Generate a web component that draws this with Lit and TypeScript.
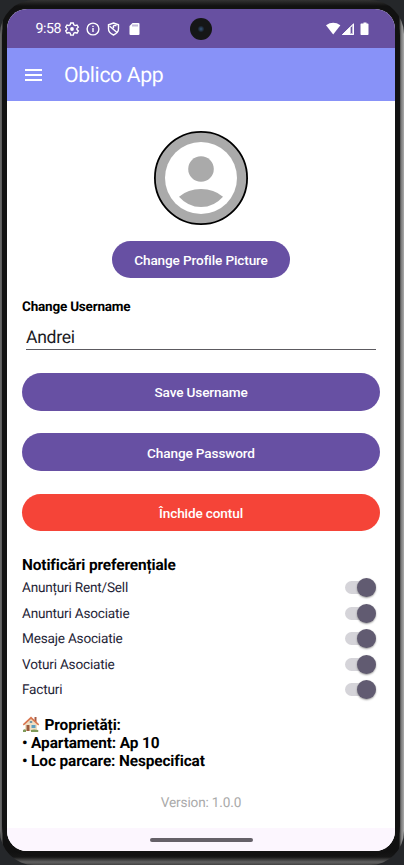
import { LitElement, html, css } from "lit";
import { customElement, property } from "lit/decorators.js";

@customElement("pref-row")
class PrefRow extends LitElement {
  @property() label = "";
  static styles = css`
    :host { display: flex; height: 25.65px; align-items: center; justify-content: space-between; padding-right: 4px; }
    .name { font-size: 13.6px; letter-spacing: -0.2px; color: #1f2537; padding-top: 1px; }
    .track { width: 31px; height: 13px; border-radius: 7px; background: #d5d4d9; display: flex; align-items: center; justify-content: flex-end; }
    .thumb { width: 19px; height: 19px; flex: none; border-radius: 50%; background: #615b71; box-shadow: 0 1px 2px rgba(0, 0, 0, 0.4); }
  `;
  render() {
    return html`<span class="name">${this.label}</span><span class="track"><span class="thumb"></span></span>`;
  }
}

@customElement("app-root")
class AppRoot extends LitElement {
  static styles = css`
    :host { display: block; width: 404px; height: 865px; overflow: hidden; font-family: Roboto, "Noto Sans", sans-serif; text-rendering: geometricPrecision; background: #25272a; color: #000; white-space: nowrap; }
    * { box-sizing: border-box; }
    .phone { width: 404px; height: 865px; padding: 6px 4px 9px 2px; border-radius: 34px; background: linear-gradient(180deg, #333 0, #111 6px, transparent 7px, transparent 852px, #161616 857px, #606060 862px, #444 865px), linear-gradient(90deg, #6b6b6b 0, #555 2px, #111 3px, #111 399px, #777 401px, #aaa 404px); }
    .bezel { height: 850px; padding: 3px 5px 5px 5px; border-radius: 30px; background: #121212; }
    .screen { width: 388px; height: 842px; border-radius: 20px; overflow: hidden; background: #fff; display: flex; flex-direction: column; }
    .status { height: 39px; flex: none; background: #6750a1; display: flex; align-items: center; color: #fff; padding: 0 26px 0 28.5px; position: relative; }
    .time { font-size: 14.2px; letter-spacing: -0.45px; line-height: 16px; width: 29px; }
    .status svg { display: block; flex: none; }
    .space { flex: 1; }
    .camera { position: absolute; left: 183px; top: 9px; width: 22px; height: 22px; border-radius: 50%; background: #151617; display: grid; place-items: center; }
    .lens { width: 6px; height: 6px; border-radius: 50%; background: radial-gradient(#35557a, #1d2836 60%, #151617); }
    .bar { height: 53px; flex: none; background: #8892f8; display: flex; align-items: center; padding-left: 18px; color: #fff; }
    .menu { width: 17px; height: 12px; margin-right: 22px; }
    .title { font-size: 21.2px; letter-spacing: -0.35px; padding-top: 1px; }
    .main { flex: 1; padding: 30px 15px 0; display: flex; flex-direction: column; }
    .avatar { width: 94px; height: 94px; align-self: center; flex: none; }
    .btn { height: 37.5px; flex: none; border: 0; border-radius: 19px; background: #6750a3; color: #fff; font: 500 13.6px Roboto, sans-serif; letter-spacing: -0.13px; padding: 1px 0 0; width: 358px; }
    .pic { width: 178px; align-self: center; margin-top: 15.5px; }
    .label { font-weight: 700; font-size: 13.5px; letter-spacing: -0.2px; line-height: 16px; margin-top: 21px; }
    .field { height: 35px; margin: 0 4px; border-bottom: 1px solid #5c5a60; font-size: 17.6px; letter-spacing: -0.3px; line-height: 46px; color: #1c1b1f; }
    .save { margin-top: 23px; }
    .next { margin-top: 22.8px; }
    .danger { background: #f54438; }
    .heading { font-weight: 700; font-size: 15.4px; letter-spacing: -0.12px; line-height: 18px; margin-top: 24.8px; }
    .list { margin-top: 0.7px; }
    .props { font-weight: 700; font-size: 15.4px; letter-spacing: -0.12px; line-height: 18px; margin-top: 13px; }
    .line { height: 18px; display: flex; align-items: center; }
    .house { width: 18px; height: 17px; margin-right: 4.5px; }
    .version { text-align: center; font-size: 13.6px; letter-spacing: -0.15px; line-height: 16px; color: #aaa; margin-top: 25px; }
    .nav { height: 23px; flex: none; background: #fcf6fe; display: flex; justify-content: center; padding-top: 10px; }
    .handle { width: 103px; height: 4px; border-radius: 2px; background: #656068; }
  `;
  render() {
    const prefs = ["Anunțuri Rent/Sell", "Anunturi Asociatie", "Mesaje Asociatie", "Voturi Asociatie", "Facturi"];
    return html`<div class="phone"><div class="bezel"><div class="screen">
      <div class="status">
        <span class="time">9:58</span>
        <svg width="100" height="16" viewBox="0 0 100 16" fill="none" stroke="#fff" stroke-width="1.4">
          <path d="M5.7 2h2.6l.5 1.900 1.300.7 1.900-.6 1.300 2.200-1.400 1.300v1l1.400 1.400-1.300 2.200-1.900-.6-1.300.7-.5 1.900H5.700l-.5-1.900-1.300-.7-1.900.6L.7 9.900l1.400-1.400v-1L.7 6.200 2 4l1.900.6 1.300-.7z"/>
          <circle cx="7" cy="8" r="1.900" fill="#fff" stroke="none"/>
          <circle cx="28" cy="8" r="5.900"/><path d="M28 7v4M28 4.700v1.400"/>
          <path d="M48.500 2l5 1.800v4c0 3-2 5-5 6.200-3-1.200-5-3.200-5-6.200v-4z"/><path d="M44.500 5l7.500 6.500M51.500 4.500h-2.500q-1.500 1 0 2.500"/>
          <path d="M67.500 2h6a1 1 0 0 1 1 1v10a1 1 0 0 1-1 1h-8a1 1 0 0 1-1-1V5z" fill="#fff" stroke="none"/>
          <path d="M68 3.500v2M70 3.500v2M72 3.500v2" stroke="#6750a1" stroke-width=".8"/>
        </svg>
        <span class="space"></span>
        <svg width="43" height="14" viewBox="0 0 43 14" fill="#fff">
          <path d="M0 3.300Q7.200-1.600 14.400 3.300L7.200 12.500z"/>
          <path d="M28 1v12H16z" opacity=".6"/><path d="M24 5v8h-8z"/><path d="M27.500 2v10.500h-11z" fill="none" stroke="#fff"/><path d="M25.500 5v6" stroke="#6750a1"/>
          <path d="M35.500 1.500h2V.5h3v1h1.200a.8.8 0 0 1 .8.800v10a.8.8 0 0 1-.8.800h-6.400a.8.8 0 0 1-.8-.800v-10a.8.8 0 0 1 .8-.800z"/>
        </svg>
        <span class="camera"><span class="lens"></span></span>
      </div>
      <div class="bar">
        <svg class="menu" viewBox="0 0 17 12" fill="#fff"><path d="M0 0h17v2H0zM0 5h17v2H0zM0 10h17v2H0z"/></svg>
        <span class="title">Oblico App</span>
      </div>
      <div class="main">
        <svg class="avatar" viewBox="0 0 94 94">
          <circle cx="47" cy="47" r="46.100" fill="#aaa" stroke="#000" stroke-width="1.800"/>
          <circle cx="47" cy="47" r="36" fill="#fff"/>
          <circle cx="47" cy="38" r="12.800" fill="#aaa"/>
          <path d="M25 65.700Q34 58 47 58t22 7.700Q60 76 47 76T25 65.700z" fill="#aaa"/>
        </svg>
        <button class="btn pic">Change Profile Picture</button>
        <div class="label">Change Username</div>
        <div class="field">Andrei</div>
        <button class="btn save">Save Username</button>
        <button class="btn next">Change Password</button>
        <button class="btn next danger">Închide contul</button>
        <div class="heading">Notificări preferențiale</div>
        <div class="list">${prefs.map((p) => html`<pref-row .label=${p}></pref-row>`)}</div>
        <div class="props">
          <div class="line">
            <svg class="house" viewBox="0 0 18 17">
              <path d="M12.500 1h2v5h-2z" fill="#a65b43"/><path d="M3 8l6-6 6 6v7H3z" fill="#f0dfc4"/>
              <path d="M9 .5L.8 8.300l1 1.200L9 3l7.200 6.500 1-1.200z" fill="#d9764f"/>
              <path d="M4.500 9h3v6h-3z" fill="#9b5a3c"/><path d="M9.500 9h4v3h-4z" fill="#5f9fc0"/><path d="M7.800 5h2.400v2H7.800z" fill="#7397a8"/>
              <path d="M1 14q2-1.500 3 0v2H1zM9 14q3-1 7 0 1 1 0 2H9z" fill="#7f9a5a"/>
            </svg>
            <span>Proprietăți:</span>
          </div>
          <div class="line">• Apartament: Ap 10</div>
          <div class="line">• Loc parcare: Nespecificat</div>
        </div>
        <div class="version">Version: 1.0.0</div>
      </div>
      <div class="nav"><div class="handle"></div></div>
    </div></div></div>`;
  }
}
